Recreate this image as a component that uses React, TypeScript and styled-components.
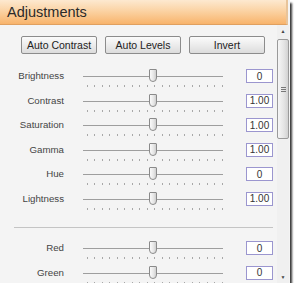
import React from 'react';
import styled, {createGlobalStyle} from "styled-components";

const GlobalStyle = createGlobalStyle`
  html, body {
    margin: 0;
    padding: 0;
    background: #ffffff;
  }
  body {
    font-family: "Liberation Sans", Arial, sans-serif;
  }
`

interface SliderItem {
    label: string;
    value: string;
}

const toneSliders: Array<SliderItem> = [
    {label: 'Brightness', value: '0'},
    {label: 'Contrast', value: '1.00'},
    {label: 'Saturation', value: '1.00'},
    {label: 'Gamma', value: '1.00'},
    {label: 'Hue', value: '0'},
    {label: 'Lightness', value: '1.00'},
];

const colorSliders: Array<SliderItem> = [
    {label: 'Red', value: '0'},
    {label: 'Green', value: '0'},
];

const SliderRow = (props: { item: SliderItem }) => {
    return (
        <Row>
            <Label>{props.item.label}</Label>
            <Slider>
                <Track/>
                <Thumb/>
                <Ticks/>
            </Slider>
            <ValueBox>{props.item.value}</ValueBox>
        </Row>
    )
};

export default function App() {
    return (
        <>
            <GlobalStyle/>
            <Frame>
                <Header>Adjustments</Header>
                <Body>
                    <Content>
                        <ButtonBar>
                            <Button>Auto Contrast</Button>
                            <Button>Auto Levels</Button>
                            <Button>Invert</Button>
                        </ButtonBar>
                        <Group top={15}>
                            {toneSliders.map((item) => <SliderRow key={item.label} item={item}/>)}
                        </Group>
                        <Separator/>
                        <Group top={0}>
                            {colorSliders.map((item) => <SliderRow key={item.label} item={item}/>)}
                        </Group>
                    </Content>
                    <ScrollBar>
                        <Arrow>▲</Arrow>
                        <ScrollThumb>
                            <Grip/>
                        </ScrollThumb>
                        <ScrollSpace/>
                        <Arrow>▼</Arrow>
                    </ScrollBar>
                </Body>
            </Frame>
        </>
    )
}

const Frame = styled.div`
  width: 290px;
  height: 283px;
  background-color: #f4f4f4;
  box-shadow: 2px 3px 2px rgba(20, 20, 20, 0.85);
  display: flex;
  flex-direction: column;
  overflow: hidden;
`

const Header = styled.div`
  height: 25px;
  flex-shrink: 0;
  box-sizing: border-box;
  padding: 4px 0 0 7px;
  background: linear-gradient(to bottom, #fde9d0 0%, #fbd3a4 45%, #f8b46c 100%);
  border-bottom: 1px solid #e0a060;
  border-right: 2px solid #e8c49a;
  margin-right: 2px;
  font-size: 14.5px;
  color: #2a2a2a;
`

const Body = styled.div`
  flex: 1;
  display: flex;
  min-height: 0;
`

const Content = styled.div`
  flex: 1;
  display: flex;
  flex-direction: column;
  overflow: hidden;

  & > * {
    flex-shrink: 0;
  }
`

const ButtonBar = styled.div`
  display: flex;
  gap: 8px;
  padding: 11px 0 0 21px;
`

const Button = styled.div`
  width: 76px;
  height: 18px;
  box-sizing: border-box;
  border: 1px solid #8c8c8c;
  border-radius: 2px;
  background: linear-gradient(to bottom, #fbfbfb 0%, #ececec 50%, #dcdcdc 100%);
  display: flex;
  align-items: center;
  justify-content: center;
  font-size: 10.5px;
  color: #222;
`

const Group = styled.div<{ top: number }>`
  display: flex;
  flex-direction: column;
  margin-top: ${props => props.top}px;
`

const Row = styled.div`
  height: 24.5px;
  display: flex;
  align-items: flex-start;
`

const Label = styled.div`
  width: 64px;
  margin-right: 19px;
  text-align: right;
  font-size: 9.7px;
  color: #444;
  line-height: 14px;
`

const Slider = styled.div`
  position: relative;
  width: 140px;
  height: 22px;
  margin-right: 23px;
`

const Track = styled.div`
  position: absolute;
  left: 0;
  right: 0;
  top: 7px;
  height: 1px;
  background-color: #9e9e9e;
`

const Thumb = styled.div`
  position: absolute;
  left: 66px;
  top: 0;
  width: 8px;
  height: 13px;
  box-sizing: border-box;
  border: 1px solid #8a8a8a;
  border-radius: 1px 1px 4px 4px;
  background: linear-gradient(to right, #fafafa 0%, #e6e6e6 60%, #cfcfcf 100%);
`

const Ticks = styled.div`
  position: absolute;
  left: 4px;
  right: 0;
  top: 16px;
  height: 2px;
  background-image: repeating-linear-gradient(to right, #a8a8a8 0px, #a8a8a8 1px, transparent 1px, transparent 7.5px);
`

const ValueBox = styled.div`
  width: 27px;
  height: 14px;
  box-sizing: border-box;
  border: 1px solid #9b96cf;
  background-color: #ffffff;
  font-size: 10px;
  color: #333;
  display: flex;
  align-items: center;
  justify-content: center;
`

const Separator = styled.div`
  height: 1px;
  background-color: #c4c4c4;
  margin: 11px 4px 13px 14px;
`

const ScrollBar = styled.div`
  width: 12px;
  margin-right: 1px;
  display: flex;
  flex-direction: column;
  align-items: stretch;
  background-color: #f0f0f0;
`

const Arrow = styled.div`
  height: 12px;
  flex-shrink: 0;
  font-size: 5px;
  color: #444;
  display: flex;
  align-items: center;
  justify-content: center;
`

const ScrollThumb = styled.div`
  height: 100px;
  flex-shrink: 0;
  margin-top: 2px;
  box-sizing: border-box;
  border: 1px solid #9a9a9a;
  border-radius: 2px;
  background: linear-gradient(to right, #f6f6f6 0%, #e4e4e4 60%, #d2d2d2 100%);
  display: flex;
  align-items: center;
  justify-content: center;
`

const Grip = styled.div`
  width: 5px;
  height: 5px;
  background-image: repeating-linear-gradient(to bottom, #777 0px, #777 1px, transparent 1px, transparent 2px);
`

const ScrollSpace = styled.div`
  flex: 1;
`
